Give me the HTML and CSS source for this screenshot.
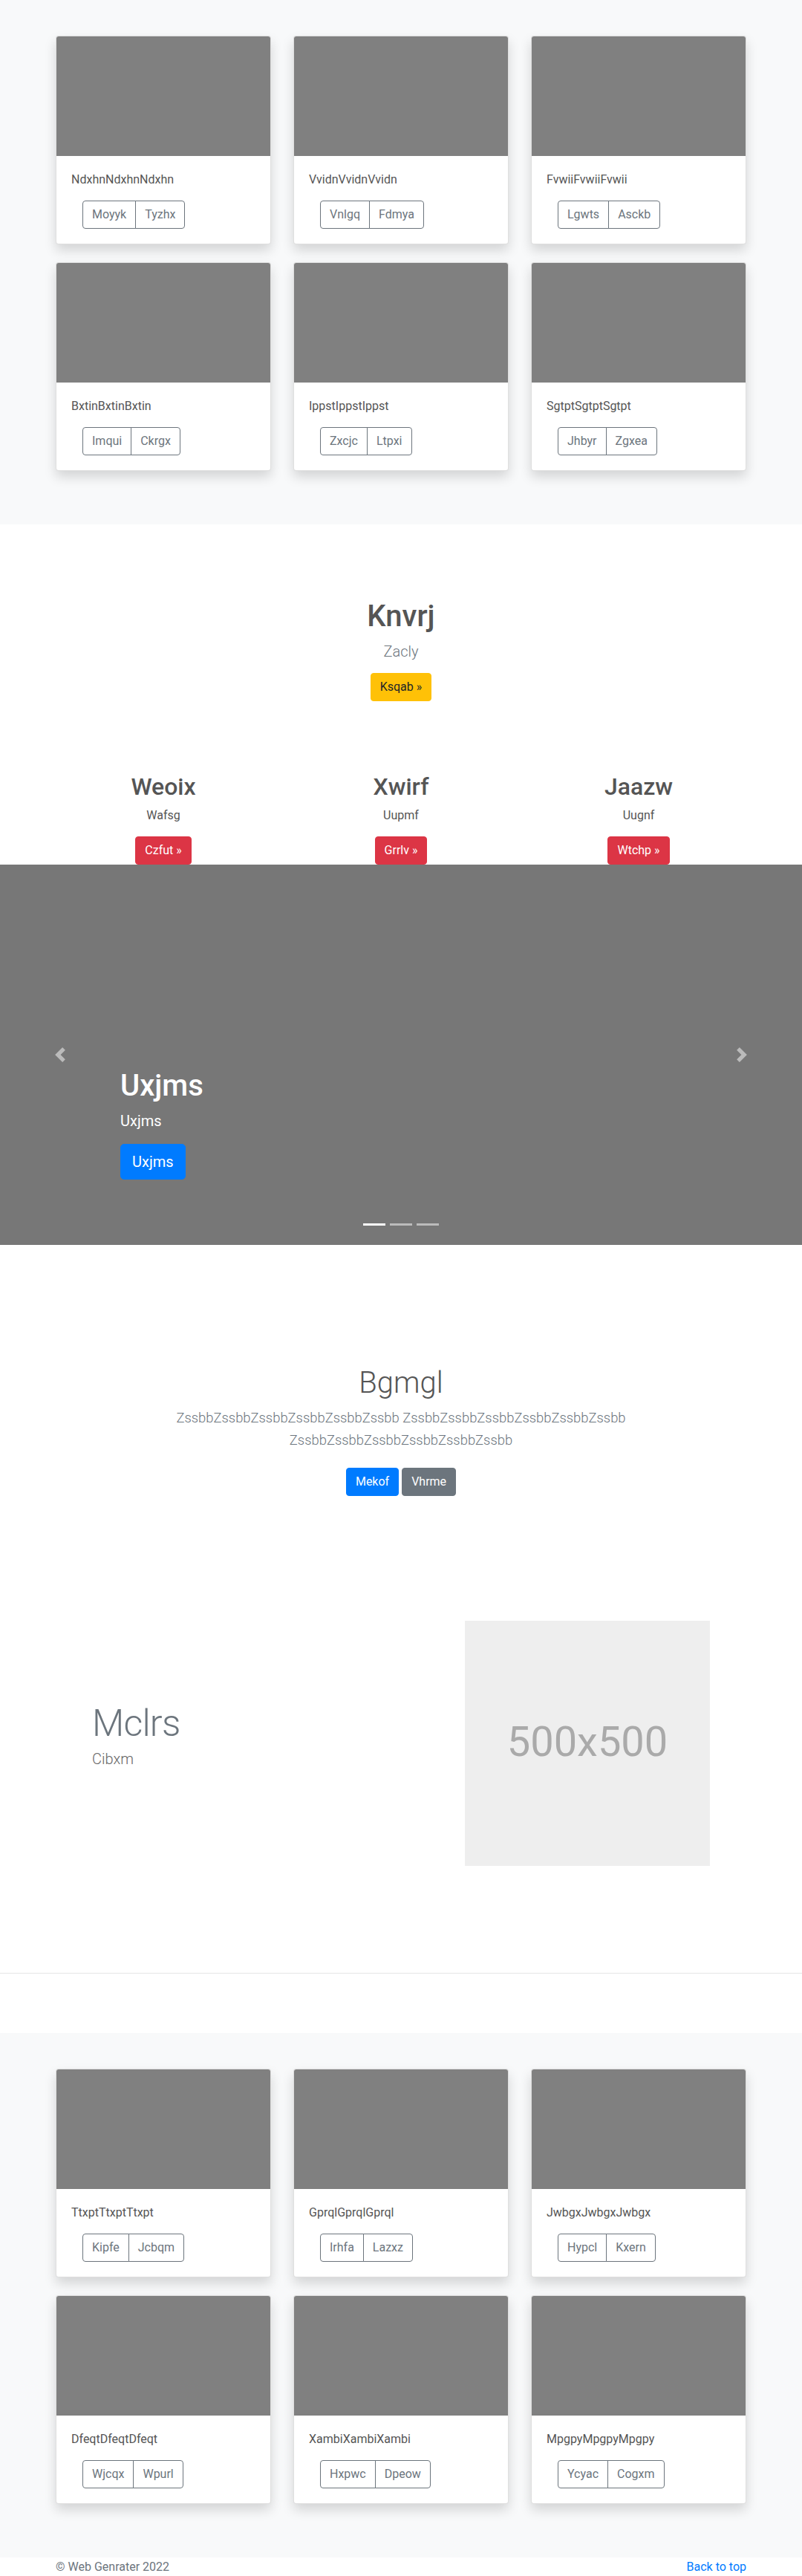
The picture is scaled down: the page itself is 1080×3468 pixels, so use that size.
FILE: index.html
```html
<!DOCTYPE html>
<html lang="en">
<head>
<meta charset="utf-8">
<title>Web Genrater</title>
<link rel="stylesheet" href="styles.css">
</head>
<body>

<section class="album">
  <div class="container">
    <div class="card-grid">
      <div class="card"><div class="thumb"></div><div class="card-body"><p class="card-text">NdxhnNdxhnNdxhn</p><div class="btn-group"><a class="btn-outline">Moyyk</a><a class="btn-outline">Tyzhx</a></div></div></div>
      <div class="card"><div class="thumb"></div><div class="card-body"><p class="card-text">VvidnVvidnVvidn</p><div class="btn-group"><a class="btn-outline">Vnlgq</a><a class="btn-outline">Fdmya</a></div></div></div>
      <div class="card"><div class="thumb"></div><div class="card-body"><p class="card-text">FvwiiFvwiiFvwii</p><div class="btn-group"><a class="btn-outline">Lgwts</a><a class="btn-outline">Asckb</a></div></div></div>
      <div class="card"><div class="thumb"></div><div class="card-body"><p class="card-text">BxtinBxtinBxtin</p><div class="btn-group"><a class="btn-outline">Imqui</a><a class="btn-outline">Ckrgx</a></div></div></div>
      <div class="card"><div class="thumb"></div><div class="card-body"><p class="card-text">IppstIppstIppst</p><div class="btn-group"><a class="btn-outline">Zxcjc</a><a class="btn-outline">Ltpxi</a></div></div></div>
      <div class="card"><div class="thumb"></div><div class="card-body"><p class="card-text">SgtptSgtptSgtpt</p><div class="btn-group"><a class="btn-outline">Jhbyr</a><a class="btn-outline">Zgxea</a></div></div></div>
    </div>
  </div>
</section>

<section class="hero">
  <h1 class="hero-title">Knvrj</h1>
  <p class="lead">Zacly</p>
  <div class="btn-row"><a class="btn btn-warning">Ksqab &raquo;</a></div>
</section>

<section class="marketing">
  <div class="feature">
    <h2>Weoix</h2>
    <p>Wafsg</p>
    <a class="btn btn-danger">Czfut &raquo;</a>
  </div>
  <div class="feature">
    <h2>Xwirf</h2>
    <p>Uupmf</p>
    <a class="btn btn-danger">Grrlv &raquo;</a>
  </div>
  <div class="feature">
    <h2>Jaazw</h2>
    <p>Uugnf</p>
    <a class="btn btn-danger">Wtchp &raquo;</a>
  </div>
</section>

<section class="carousel">
  <a class="carousel-control prev">
    <svg width="20" height="20" viewBox="0 0 8 8"><path fill="#fff" d="M5.25 0l-4 4 4 4 1.5-1.5L4.25 4l2.5-2.5L5.25 0z"/></svg>
  </a>
  <a class="carousel-control next">
    <svg width="20" height="20" viewBox="0 0 8 8"><path fill="#fff" d="M2.75 0l-1.5 1.5L3.75 4l-2.5 2.5L2.75 8l4-4-4-4z"/></svg>
  </a>
  <div class="carousel-caption">
    <h1>Uxjms</h1>
    <p>Uxjms</p>
    <div class="caption-action"><a class="btn btn-lg btn-primary">Uxjms</a></div>
  </div>
  <div class="indicators">
    <span class="indicator active"></span>
    <span class="indicator"></span>
    <span class="indicator"></span>
  </div>
</section>

<section class="jumbotron">
  <div class="jumbo-inner">
    <h1>Bgmgl</h1>
    <p class="lead">ZssbbZssbbZssbbZssbbZssbbZssbb ZssbbZssbbZssbbZssbbZssbbZssbb ZssbbZssbbZssbbZssbbZssbbZssbb</p>
    <div class="btn-row gap"><a class="btn btn-primary">Mekof</a><a class="btn btn-secondary">Vhrme</a></div>
  </div>
</section>

<section class="featurette">
  <div class="featurette-text">
    <h2>Mclrs</h2>
    <p class="lead">Cibxm</p>
  </div>
  <div class="featurette-media">
    <svg class="placeholder" width="330" height="330" viewBox="0 0 330 330">
      <rect width="100%" height="100%" fill="#eee"/>
      <text x="50%" y="50%" dy=".3em" text-anchor="middle" fill="#aaa">500x500</text>
    </svg>
  </div>
</section>

<hr class="divider">

<section class="album">
  <div class="container">
    <div class="card-grid">
      <div class="card"><div class="thumb"></div><div class="card-body"><p class="card-text">TtxptTtxptTtxpt</p><div class="btn-group"><a class="btn-outline">Kipfe</a><a class="btn-outline">Jcbqm</a></div></div></div>
      <div class="card"><div class="thumb"></div><div class="card-body"><p class="card-text">GprqlGprqlGprql</p><div class="btn-group"><a class="btn-outline">Irhfa</a><a class="btn-outline">Lazxz</a></div></div></div>
      <div class="card"><div class="thumb"></div><div class="card-body"><p class="card-text">JwbgxJwbgxJwbgx</p><div class="btn-group"><a class="btn-outline">Hypcl</a><a class="btn-outline">Kxern</a></div></div></div>
      <div class="card"><div class="thumb"></div><div class="card-body"><p class="card-text">DfeqtDfeqtDfeqt</p><div class="btn-group"><a class="btn-outline">Wjcqx</a><a class="btn-outline">Wpurl</a></div></div></div>
      <div class="card"><div class="thumb"></div><div class="card-body"><p class="card-text">XambiXambiXambi</p><div class="btn-group"><a class="btn-outline">Hxpwc</a><a class="btn-outline">Dpeow</a></div></div></div>
      <div class="card"><div class="thumb"></div><div class="card-body"><p class="card-text">MpgpyMpgpyMpgpy</p><div class="btn-group"><a class="btn-outline">Ycyac</a><a class="btn-outline">Cogxm</a></div></div></div>
    </div>
  </div>
</section>

<footer class="footer">
  <div class="container footer-row">
    <p>&copy; Web Genrater 2022</p>
    <p><a class="top-link">Back to top</a></p>
  </div>
</footer>

</body>
</html>
```

FILE: styles.css
```css
* { box-sizing: border-box; }

body {
  margin: 0;
  font-family: Roboto, "Liberation Sans", Arial, sans-serif;
  font-size: 16px;
  line-height: 1.5;
  color: #555;
  background: #fff;
}

.container {
  width: 930px;
  margin: 0 auto;
}

/* ---------- album ---------- */
.album {
  background: #f8f9fa;
  padding: 48px 0 72px;
}

.card-grid {
  display: grid;
  grid-template-columns: repeat(3, 290px);
  column-gap: 30px;
  row-gap: 24px;
}

.card {
  background: #fff;
  border: 1px solid rgba(0, 0, 0, .125);
  border-radius: 4px;
  box-shadow: 0 8px 16px rgba(0, 0, 0, .15);
  overflow: hidden;
}

.thumb {
  height: 161px;
  background: #808080;
}

.card-body {
  padding: 20px;
}

.card-text {
  margin: 0 0 16px;
  line-height: 24px;
  color: #555;
}

.btn-group {
  display: flex;
  margin-left: 15px;
}

.btn-outline {
  display: block;
  padding: 6px 12px;
  font-size: 16px;
  line-height: 24px;
  color: #6c757d;
  border: 1px solid #6c757d;
  background: transparent;
}

.btn-outline:first-child {
  border-radius: 4px 0 0 4px;
}

.btn-outline + .btn-outline {
  margin-left: -1px;
  border-radius: 0 4px 4px 0;
}

/* ---------- buttons ---------- */
.btn {
  display: inline-block;
  padding: 6px 12px;
  font-size: 16px;
  line-height: 24px;
  border: 1px solid transparent;
  border-radius: 4px;
  text-decoration: none;
}

.btn-warning { background: #ffc107; border-color: #ffc107; color: #212529; }
.btn-danger { background: #dc3545; border-color: #dc3545; color: #fff; }
.btn-primary { background: #007bff; border-color: #007bff; color: #fff; }
.btn-secondary { background: #6c757d; border-color: #6c757d; color: #fff; }

.btn-lg {
  padding: 8px 16px;
  font-size: 20px;
  line-height: 30px;
  border-radius: 5px;
}

.btn-row {
  display: flex;
  justify-content: center;
}

.btn-row.gap {
  gap: 4px;
}

.lead {
  font-size: 20px;
  line-height: 30px;
  font-weight: 300;
  color: #6c757d;
}

/* ---------- hero ---------- */
.hero {
  padding-top: 100px;
  text-align: center;
}

.hero-title {
  margin: 0 0 8px;
  font-size: 40px;
  line-height: 48px;
  font-weight: 500;
  color: #555;
}

.hero .lead {
  margin: 0 0 14px;
}

/* ---------- marketing ---------- */
.marketing {
  width: 960px;
  margin: 96px auto 0;
  display: grid;
  grid-template-columns: repeat(3, 320px);
}

.feature {
  display: flex;
  flex-direction: column;
  align-items: center;
  text-align: center;
}

.feature h2 {
  margin: 0 0 8px;
  font-size: 32px;
  line-height: 38.4px;
  font-weight: 500;
  color: #555;
}

.feature p {
  margin: 0 0 16px;
  line-height: 24px;
  color: #555;
}

/* ---------- carousel ---------- */
.carousel {
  position: relative;
  height: 512px;
  background: #777;
}

.carousel-control {
  position: absolute;
  top: 0;
  bottom: 0;
  width: 15%;
  display: flex;
  align-items: center;
  justify-content: center;
  opacity: .5;
}

.carousel-control svg { display: block; }

.carousel-control.prev { left: 0; }
.carousel-control.next { right: 0; }

.carousel-caption {
  position: absolute;
  left: 15%;
  right: 15%;
  bottom: 48px;
  padding: 20px 0;
  color: #fff;
  text-align: left;
}

.carousel-caption h1 {
  margin: 0 0 8px;
  font-size: 40px;
  line-height: 48px;
  font-weight: 500;
}

.carousel-caption p {
  margin: 0 0 16px;
  font-size: 20px;
  line-height: 30px;
}

.caption-action {
  display: flex;
  margin-bottom: 20px;
}

.caption-action .btn-lg {
  padding: 8px 15px;
}

.indicators {
  position: absolute;
  left: 0;
  right: 0;
  bottom: 26px;
  display: flex;
  justify-content: center;
  gap: 6px;
}

.indicator {
  width: 30px;
  height: 3px;
  background: #fff;
  opacity: .5;
}

.indicator.active { opacity: 1; }

/* ---------- jumbotron ---------- */
.jumbotron {
  padding: 162px 0 72px;
  text-align: center;
}

.jumbo-inner {
  width: 680px;
  margin: 0 auto;
}

.jumbotron h1 {
  margin: 0 0 8px;
  font-size: 40px;
  line-height: 48px;
  font-weight: 300;
  color: #555;
}

.jumbotron .lead {
  margin: 0 0 22px;
  font-size: 18.4px;
}

/* ---------- featurette ---------- */
.featurette {
  width: 960px;
  margin: 0 auto;
  padding: 96px 0 144px;
  display: grid;
  grid-template-columns: 1fr 1fr;
  align-items: center;
}

.featurette-text {
  padding: 0 64px;
}

.featurette-text h2 {
  margin: 0 0 8px;
  font-size: 50px;
  line-height: 1;
  font-weight: 300;
  letter-spacing: -0.8px;
  color: #6c757d;
}

.featurette-text .lead {
  margin: 0 0 16px;
  color: #666;
}

.featurette-media {
  padding: 0 64px;
  display: flex;
  justify-content: flex-end;
}

.placeholder {
  display: block;
  font-family: Roboto, "Liberation Sans", Arial, sans-serif;
  font-size: 56px;
}

.divider {
  border: 0;
  border-top: 1px solid rgba(0, 0, 0, .1);
  margin: 0 0 80px;
  height: 0;
}

/* ---------- footer ---------- */
.footer {
  padding-top: 1px;
  color: #6c757d;
}

.footer-row {
  display: flex;
  justify-content: space-between;
}

.footer-row p {
  margin: 0;
  line-height: 24px;
}

.top-link {
  color: #007bff;
  text-decoration: none;
}
```
